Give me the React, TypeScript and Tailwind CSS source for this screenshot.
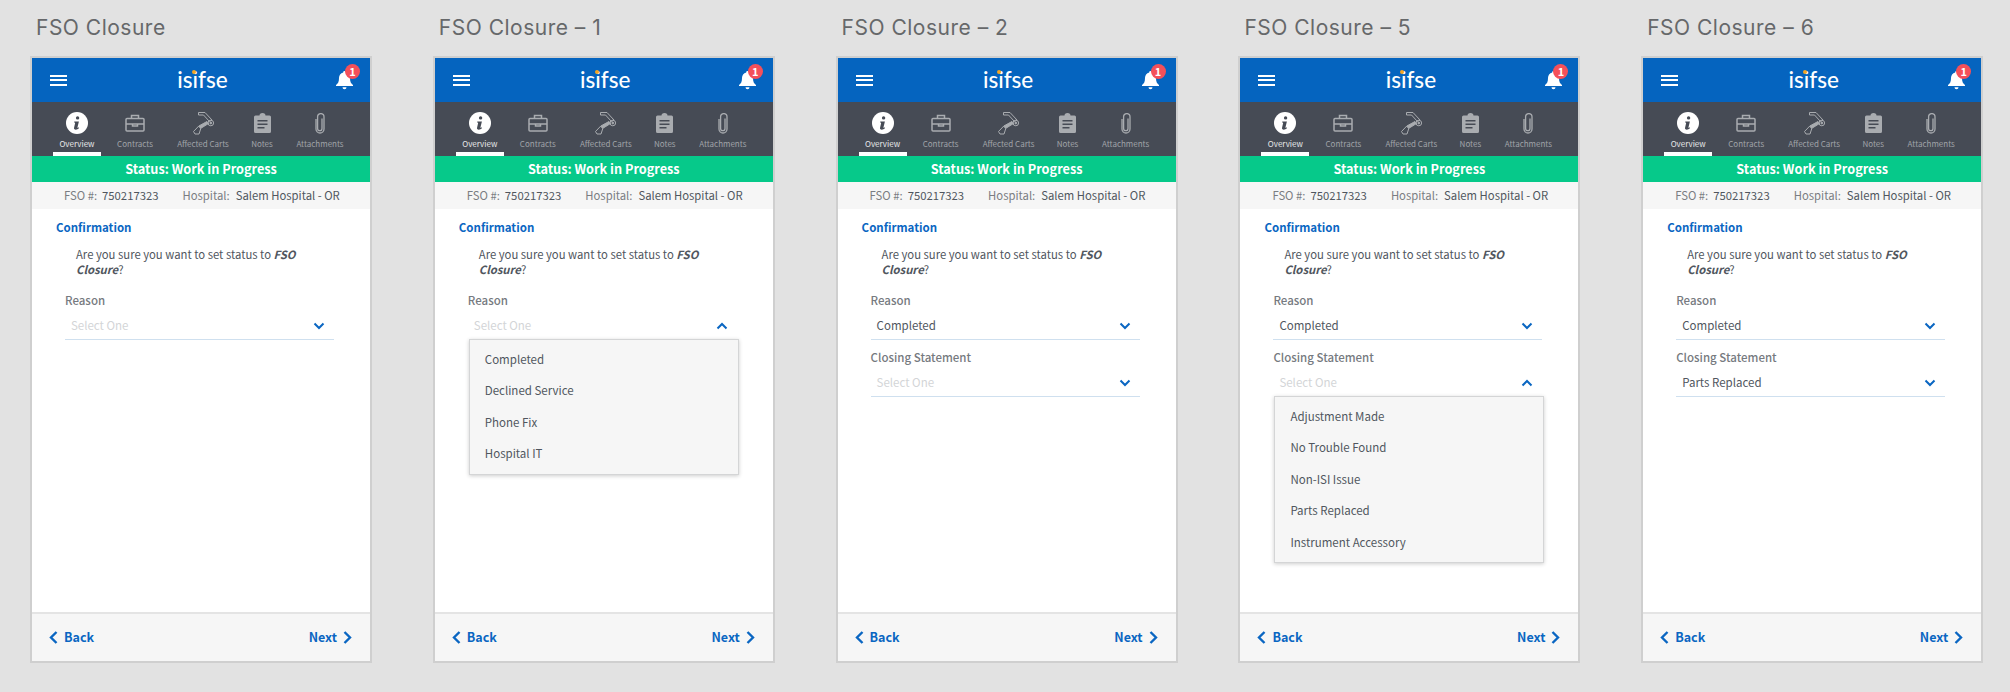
import React from "react";

const Chevron = ({ up = false }: { up?: boolean }) => (
  <svg width="12" height="8" viewBox="0 0 12 8" fill="none" stroke="#0a66c2" strokeWidth="2">
    <path d={up ? "M1.500 6.500 6 2l4.500 4.500" : "M1.500 1.500 6 6l4.500-4.500"} />
  </svg>
);

const InfoIcon = () => (
  <svg width="22" height="22" viewBox="0 0 22 22">
    <circle cx="11" cy="11" r="11" fill="#fff" />
    <path d="M11.600 4.200a1.700 1.700 0 1 1 0 3.400 1.700 1.700 0 0 1 0-3.400ZM8.300 9.400h4.600l-1.500 6c-.1.500.4.600 1.400-.1l.3.800c-1.100 1.100-2.200 1.600-3.300 1.600-1.400 0-2.100-.8-1.700-2.200l1-4.200c.1-.6-.2-.8-1-.8Z" fill="#464b55" />
  </svg>
);

const BriefcaseIcon = () => (
  <svg width="20" height="18" viewBox="0 0 20 18" fill="none" stroke="#a9acb0" strokeWidth="1.500">
    <rect x="1" y="4.500" width="18" height="12.500" rx="1" />
    <path d="M6.500 4.500V1.500h7v3M1 10h18" />
    <path d="M7.500 10v2h5v-2" />
  </svg>
);

const ArmIcon = () => (
  <svg width="23" height="23" viewBox="0 0 23 23" fill="none" stroke="#a9acb0" strokeWidth="1">
    <path d="M6.500 .500H13l7 7.500-2.500 1.500L11.500 3H6.500Z" />
    <path d="M16.500 11.500 8.500 16.500 6.800 14 15 9.500Z" fill="#a9acb0" />
    <circle cx="18.800" cy="11" r="2.800" />
    <circle cx="18.800" cy="11" r=".9" fill="#a9acb0" />
    <path d="M6.800 14 1.500 19.500 3 22h4l1.800-5.500" />
  </svg>
);

const NotesIcon = () => (
  <svg width="17" height="20" viewBox="0 0 17 20">
    <path fillRule="evenodd" fill="#a9acb0" d="M1.500 2.500H5.500a3 2.500 0 0 1 6 0h4A1.500 1.500 0 0 1 17 4v14.500a1.500 1.500 0 0 1-1.500 1.500h-14A1.500 1.500 0 0 1 0 18.500V4a1.500 1.500 0 0 1 1.500-1.500ZM3.500 7v1.500h10V7Zm0 3.500V12h10v-1.500Zm0 3.500v1.500h7V14Z" />
  </svg>
);

const ClipIcon = () => (
  <svg width="12" height="21" viewBox="0 0 12 21" fill="none" stroke="#a9acb0" strokeWidth="1.300">
    <path d="M8 5.500v10a2.200 2.200 0 0 1-4.400 0V3.800a3.200 3.200 0 0 1 6.400 0v12.200a4 4 0 0 1-8 0V6" />
  </svg>
);

const tabs = [
  { label: "Overview", w: "w-[48px]", icon: <InfoIcon />, on: true },
  { label: "Contracts", w: "w-[48px]", icon: <BriefcaseIcon />, on: false },
  { label: "Affected Carts", w: "w-[68px]", icon: <ArmIcon />, on: false },
  { label: "Notes", w: "w-[30px]", icon: <NotesIcon />, on: false },
  { label: "Attachments", w: "w-[66px]", icon: <ClipIcon />, on: false },
];

const font = "font-['Noto_Sans_CJK_SC','Noto_Sans',sans-serif]";

type SelectProps = { label: string; value?: string; open?: string[] };

const Select = ({ label, value, open }: SelectProps) => (
  <div className="relative mt-[9px] first:mt-[15px]">
    <div className="h-[16px] text-[11.500px] leading-[16px] font-medium text-[#767a80]">{label}</div>
    <div className={`flex h-[32px] items-center justify-between pt-[4px] pl-[6px] pr-[9px] ${open ? "" : "border-b border-[#cfe0ef]"}`}>
      <span className={`text-[11.500px] ${value ? "text-[#50565e]" : "text-[#d3d5d7]"}`}>{value ?? "Select One"}</span>
      <Chevron up={!!open} />
    </div>
    {open && (
      <div className="absolute left-[1px] top-[47px] z-10 w-[270px] border border-[#d4d5d6] bg-[#f6f6f6] py-[4px] pl-[15px] shadow-[0_1px_4px_rgba(0,0,0,0.2)]">
        {open.map((o) => (
          <div key={o} className="flex h-[31.400px] items-center text-[11.500px] text-[#50565e]">{o}</div>
        ))}
      </div>
    )}
  </div>
);

const Phone = ({ title, fields }: { title: string; fields: SelectProps[] }) => (
  <div className="flex w-[342px] flex-col">
    <div className="mb-[13px] mt-[1px] h-[30px] pl-[6px] font-['Inter',sans-serif] text-[21px] leading-[30px] tracking-[0.5px] text-[#66686a]">{title}</div>
    <div className={`flex h-[607px] flex-col border-2 border-[#cfcfcf] bg-white ${font}`}>
      <div className="flex h-[44px] items-center justify-between bg-[#0564bf] pl-[18px] pr-[15px]">
        <div className="flex w-[17px] flex-col gap-[2.500px]">
          <div className="h-[2px] bg-white" />
          <div className="h-[2px] bg-white" />
          <div className="h-[2px] bg-white" />
        </div>
        <div className="relative ml-[3px] font-['Lato',sans-serif] text-[22.500px] leading-[30px] font-medium text-white">
          isifse
          <div className="absolute left-[14.500px] top-[4.500px] h-[4px] w-[4px] rounded-full bg-[#f5a623]" />
        </div>
        <div className="relative flex h-[24px] w-[20px] items-center justify-center">
          <svg width="17" height="19" viewBox="0 0 17 19" fill="#fff">
            <path d="M8.500 0a1.300 1.300 0 0 1 1.300 1.400C12.500 2 14 4.200 14 7c0 4 1 5.500 3 7v1H0v-1c2-1.500 3-3 3-7 0-2.800 1.500-5 4.200-5.600A1.300 1.300 0 0 1 8.500 0ZM6.500 16.200h4a2 2 0 0 1-4 0Z" />
          </svg>
          <div className="absolute left-[10px] top-[-4px] flex h-[15px] w-[15px] items-center justify-center rounded-full bg-[#f4505a] text-[11px] leading-none font-semibold text-white">1</div>
        </div>
      </div>
      <div className="flex h-[54px] gap-[10px] bg-[#464b55] pl-[21px]">
        {tabs.map((t) => (
          <div key={t.label} className={`flex ${t.w} h-[54px] flex-col items-center border-b-4 ${t.on ? "border-white" : "border-transparent"}`}>
            <div className="mt-[9px] flex h-[24px] items-center justify-center">{t.icon}</div>
            <div className={`mt-[3px] whitespace-nowrap text-[8px] leading-[12px] ${t.on ? "text-[#e8e9ea]" : "text-[#a0a3a8]"}`}>{t.label}</div>
          </div>
        ))}
      </div>
      <div className="flex h-[26px] items-center justify-center bg-[#06c98a] text-[12.700px] font-semibold text-white">Status: Work in Progress</div>
      <div className="flex h-[27px] items-center whitespace-nowrap bg-[#f6f6f6] pl-[32px] text-[11.300px] text-[#50565e]">
        <span className="text-[#7a7d82]">FSO #:</span>
        <span className="ml-[5px]">750217323</span>
        <span className="ml-[24px] text-[#7a7d82]">Hospital:</span>
        <span className="ml-[6px]">Salem Hospital - OR</span>
      </div>
      <div className="flex-1 pl-[24px] pr-[36px] pt-[9px]">
        <div className="text-[11.500px] leading-[18px] font-semibold text-[#0a66c2]">Confirmation</div>
        <div className="mt-[11px] pl-[20px] text-[11.300px] leading-[15px] text-[#50565e]">
          Are you sure you want to set status to <b className="font-semibold italic">FSO Closure</b>?
        </div>
        <div className="ml-[9px] mt-[7px]">
          {fields.map((f) => (
            <Select key={f.label} {...f} />
          ))}
        </div>
      </div>
      <div className="flex h-[49px] items-center justify-between border-t-2 border-[#e4e4e4] bg-[#f6f6f6] pl-[17px] pr-[18px] text-[12.500px] font-semibold text-[#0a66c2]">
        <div className="flex items-center gap-[6px]">
          <svg width="9" height="13" viewBox="0 0 9 13" fill="none" stroke="#0a66c2" strokeWidth="2.400"><path d="M7.500 1 2 6.500 7.500 12" /></svg>
          Back
        </div>
        <div className="flex items-center gap-[6px]">
          Next
          <svg width="9" height="13" viewBox="0 0 9 13" fill="none" stroke="#0a66c2" strokeWidth="2.400"><path d="M1.500 1 7 6.500 1.500 12" /></svg>
        </div>
      </div>
    </div>
  </div>
);

const reasons = ["Completed", "Declined Service", "Phone Fix", "Hospital IT"];
const statements = ["Adjustment Made", "No Trouble Found", "Non-ISI Issue", "Parts Replaced", "Instrument Accessory"];

const phones: { title: string; fields: SelectProps[] }[] = [
  { title: "FSO Closure", fields: [{ label: "Reason" }] },
  { title: "FSO Closure – 1", fields: [{ label: "Reason", open: reasons }] },
  { title: "FSO Closure – 2", fields: [{ label: "Reason", value: "Completed" }, { label: "Closing Statement" }] },
  { title: "FSO Closure – 5", fields: [{ label: "Reason", value: "Completed" }, { label: "Closing Statement", open: statements }] },
  { title: "FSO Closure – 6", fields: [{ label: "Reason", value: "Completed" }, { label: "Closing Statement", value: "Parts Replaced" }] },
];

export default function App() {
  return (
    <div className="flex h-[692px] w-[2010px] gap-[60.800px] overflow-hidden bg-[#e2e2e2] pl-[30px] pt-[12px]">
      {phones.map((p) => (
        <Phone key={p.title} {...p} />
      ))}
    </div>
  );
}
